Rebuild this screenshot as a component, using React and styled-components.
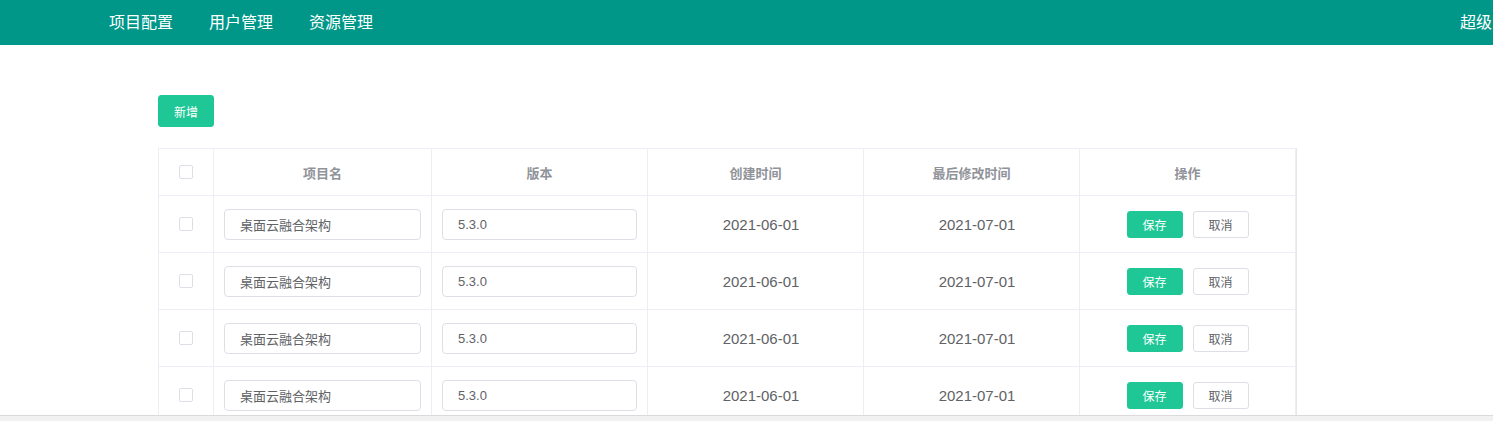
import React from "react";
import styled, { createGlobalStyle } from "styled-components";

const Global = createGlobalStyle`
  html, body { margin: 0; padding: 0; background: #fff; overflow: hidden; }
  body { font-family: "Liberation Sans", "Noto Sans CJK SC", sans-serif; }
  * { box-sizing: border-box; }
`;

const Nav = styled.header`
  height: 45px;
  background: #009688;
  display: flex;
  align-items: center;
  padding-left: 91px;
  position: relative;
  white-space: nowrap;
`;

const NavItem = styled.a`
  color: #fff;
  font-size: 16px;
  padding: 0 18px;
  line-height: 45px;
  text-decoration: none;
  cursor: pointer;
`;

const NavRight = styled.div`
  margin-left: auto;
  color: #fff;
  font-size: 16px;
  line-height: 45px;
  margin-right: -47px;
  width: 80px;
`;

const Main = styled.main`
  padding: 50px 0 0 158px;
`;

const Button = styled.button`
  height: ${(p) => (p.$large ? "32px" : "27px")};
  width: 56px;
  padding: 0;
  font-size: 12px;
  font-family: inherit;
  border-radius: 3px;
  cursor: pointer;
  color: ${(p) => (p.$plain ? "#606266" : "#fff")};
  background: ${(p) => (p.$plain ? "#fff" : "#1fc796")};
  border: 1px solid ${(p) => (p.$plain ? "#dcdfe6" : "#1fc796")};
`;

const Table = styled.div`
  margin-top: 21px;
  display: grid;
  grid-template-columns: 55px 218px 216px 216px 216px 216px;
  width: max-content;
  border-top: 1px solid #ebeef5;
  border-left: 1px solid #ebeef5;
  border-right: 1px solid #e4e8ef;
`;

const Cell = styled.div`
  height: ${(p) => (p.$head ? "47px" : "57px")};
  border-right: 1px solid #ebeef5;
  border-bottom: 1px solid #ebeef5;
  display: flex;
  align-items: center;
  justify-content: center;
  padding: ${(p) => (p.$input ? "0 10px" : p.$text ? "0 0 0 11px" : "0")};
  font-size: ${(p) => (p.$head ? "13px" : "15px")};
  font-weight: ${(p) => (p.$head ? "bold" : "normal")};
  color: ${(p) => (p.$head ? "#909399" : "#606266")};
`;

const Check = styled.span`
  width: 14px;
  height: 14px;
  border: 1px solid #dcdfe6;
  border-radius: 2px;
  background: #fff;
  display: inline-block;
`;

const Input = styled.input`
  width: 100%;
  height: 31px;
  border: 1px solid #dcdfe6;
  border-radius: 4px;
  padding: 0 15px;
  font-size: 13px;
  font-family: inherit;
  color: #606266;
  outline: none;
  background: #fff;
`;

const Actions = styled.div`
  display: flex;
  gap: 10px;
`;

const BottomBar = styled.div`
  position: fixed;
  left: 0;
  right: 0;
  bottom: 0;
  height: 6px;
  background: #f1f1f1;
  border-top: 1px solid #dadada;
`;

const rows = Array.from({ length: 4 }, () => ({
  name: "桌面云融合架构",
  version: "5.3.0",
  created: "2021-06-01",
  updated: "2021-07-01",
}));

export default function App() {
  return (
    <>
      <Global />
      <Nav>
        <NavItem>项目配置</NavItem>
        <NavItem>用户管理</NavItem>
        <NavItem>资源管理</NavItem>
        <NavRight>超级管理员</NavRight>
      </Nav>
      <Main>
        <Button $large>新增</Button>
        <Table>
          <Cell $head><Check /></Cell>
          <Cell $head>项目名</Cell>
          <Cell $head>版本</Cell>
          <Cell $head>创建时间</Cell>
          <Cell $head>最后修改时间</Cell>
          <Cell $head>操作</Cell>
          {rows.map((r, i) => (
            <React.Fragment key={i}>
              <Cell><Check /></Cell>
              <Cell $input><Input defaultValue={r.name} /></Cell>
              <Cell $input><Input defaultValue={r.version} /></Cell>
              <Cell $text>{r.created}</Cell>
              <Cell $text>{r.updated}</Cell>
              <Cell>
                <Actions>
                  <Button>保存</Button>
                  <Button $plain>取消</Button>
                </Actions>
              </Cell>
            </React.Fragment>
          ))}
        </Table>
      </Main>
      <BottomBar />
    </>
  );
}
